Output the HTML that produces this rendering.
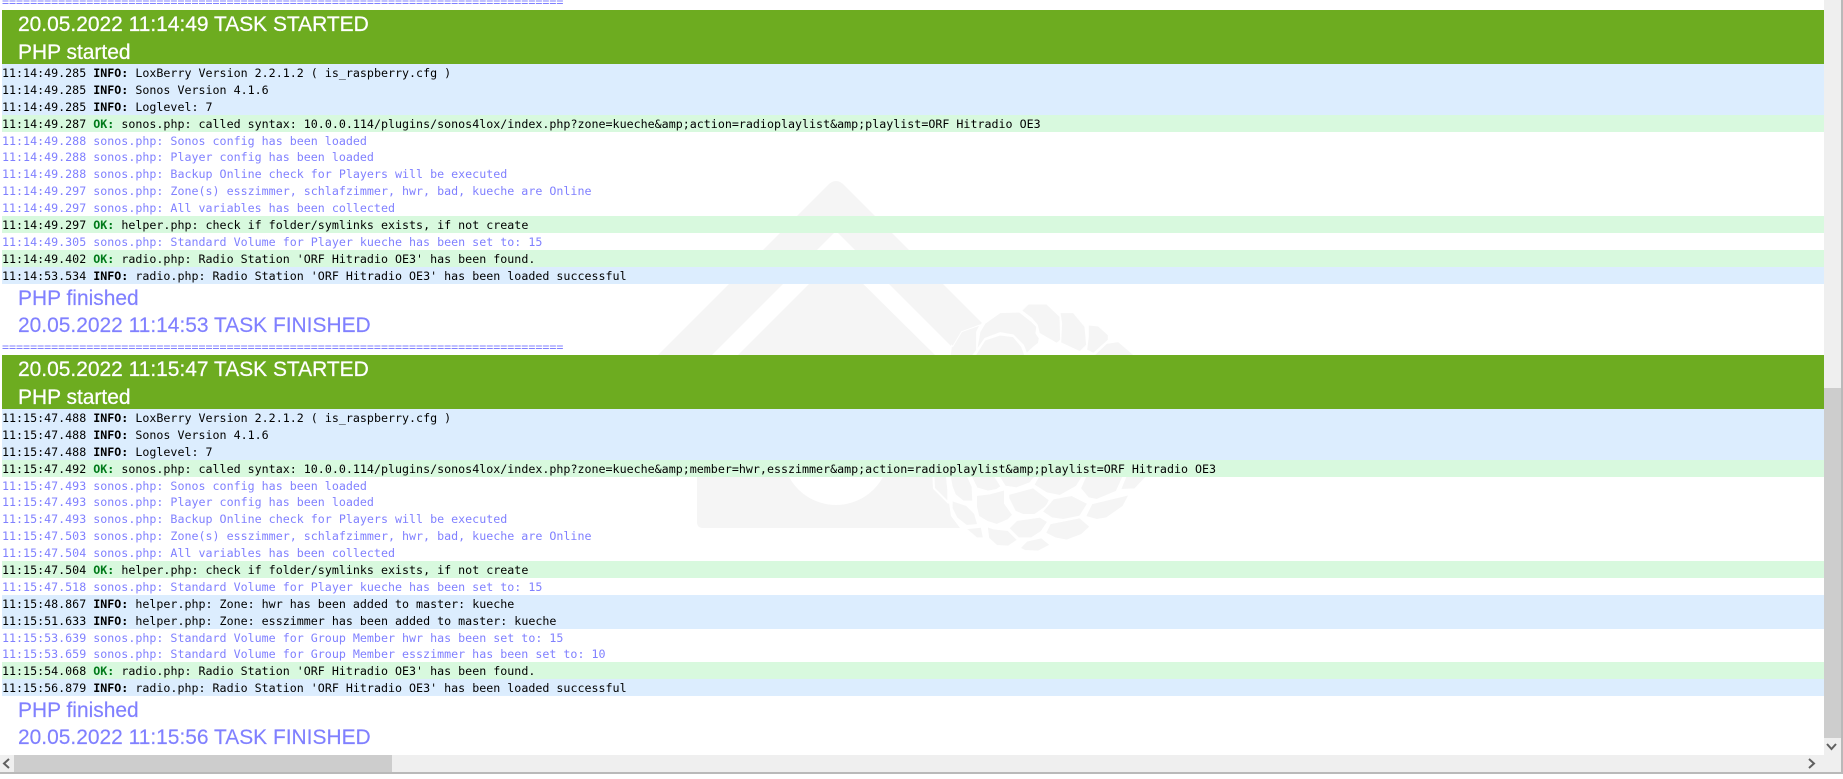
<!DOCTYPE html>
<html lang="en">
<head>
<meta charset="utf-8">
<title>Log</title>
<style>
html,body{margin:0;padding:0;background:#fff}
body{position:relative;width:1843px;height:779px;overflow:hidden}
#wm{position:absolute;left:0;top:0}
#view{position:absolute;left:0;top:0;width:1824px;height:755px;overflow:hidden}
.sep,.b{position:absolute;left:2px;width:1822px}
.sep{height:17px;line-height:17px;font:11.66px/17px "DejaVu Sans Mono",monospace;color:#8080ff;white-space:pre}
.h{position:absolute;left:2px;width:1822px;height:54px;background:#6dac20;color:#fff}
.l,.f{position:absolute;left:18px;font:20.95px/27px "Liberation Sans",Arial,sans-serif;white-space:pre;-webkit-text-stroke:.25px currentColor}
.f{color:#8080ff;-webkit-text-stroke:.15px currentColor}
.b div{height:16.9px;line-height:18.9px;font-family:"DejaVu Sans Mono",monospace;font-size:11.66px;white-space:pre;color:#000}
.i{background:#dcedfe}
.o{background:#d8f9de}
.b div.p{color:#8080ff}
b{font-weight:bold}
.o b{color:#007a1a}
.a{position:absolute;background:#efefef}
.t{position:absolute;background:#cdcdcd}
</style>
</head>
<body>
<svg id="wm" width="1843" height="779" viewBox="0 0 1843 779">
<g fill="#f5f5f5">
<path d="M593,420 L828,185 Q836,177 844,185 L982,323 L975,329 L965,336 L952,347 L836,231 L647,420 Z"/>
<path d="M836,257 L697,396 L697,522 Q697,528 703,528 L960,528 L951,516 L949,503 L934,488 L933,440 L935,355 Z"/>
</g>
<circle cx="836" cy="451.6" r="53.4" fill="#fff"/>
<g fill="#f5f5f5" stroke="#fff" stroke-width="3" transform="translate(930,290) scale(.3333)" stroke-linejoin="round">
<path d="M65,165 L68,170 L95,125 L150,105 L140,125 L140,180 L125,200 L60,200 Z"/>
<path d="M150,125 L165,100 L210,68 L268,66 L305,95 L320,110 L318,130 L328,145 L325,160 L312,170 L290,190 L280,165 L250,135 L210,128 L165,145 L140,180 Z"/>
<path d="M135,198 L165,150 L210,135 L250,140 L275,170 L285,198 Z"/>
<path d="M275,62 L295,42 L350,42 L390,80 L392,150 L380,160 L328,130 L322,105 L305,85 Z"/>
<path d="M390,68 L430,68 L465,110 L470,165 L450,185 L392,158 L395,100 Z"/>
<path d="M475,105 L505,108 L535,135 L535,150 L490,190 L470,180 L475,140 Z"/>
<path d="M490,198 L530,160 L565,155 L615,198 Z"/>
</g>
<g fill="#f5f5f5" stroke="#fff" stroke-width="6" transform="translate(680,470) scale(.3333)" stroke-linejoin="round">
<path d="M760,10 L762,55 L805,98 L805,60 L800,10 Z"/>
<path d="M808,10 L815,50 L825,75 L850,95 L880,95 L878,50 L860,10 Z"/>
<path d="M888,75 L930,70 L975,58 L975,100 L1000,135 L985,150 L950,165 L920,155 L895,140 L888,110 Z"/>
<path d="M868,10 L890,55 L925,65 L950,60 L965,50 L940,10 Z"/>
<path d="M950,10 L975,50 L1010,55 L1050,40 L1075,10 Z"/>
<path d="M985,72 L1060,52 L1090,75 L1110,90 L1100,110 L1065,135 L1030,135 L1005,125 L985,85 Z"/>
<path d="M1080,10 L1060,45 L1100,70 L1140,78 L1190,50 L1215,10 Z"/>
<path d="M1120,85 L1175,75 L1225,100 L1200,140 L1150,150 L1115,145 L1085,125 Z"/>
<path d="M1220,10 L1200,55 L1225,85 L1250,90 L1310,65 L1335,10 Z"/>
<path d="M1235,100 L1350,72 L1330,110 L1280,145 L1250,150 L1215,140 Z"/>
<path d="M1340,10 L1320,60 L1365,58 L1410,10 Z"/>
<path d="M815,90 L860,105 L885,130 L895,165 L860,168 L830,145 L815,115 Z"/>
<path d="M855,175 L905,170 L912,205 L890,205 Z"/>
<path d="M920,168 L940,175 L985,180 L1015,210 L985,230 L950,228 L925,205 Z"/>
<path d="M985,175 L1010,150 L1080,140 L1105,155 L1085,185 L1055,205 L1015,205 Z"/>
<path d="M1110,160 L1200,142 L1232,170 L1205,195 L1160,212 L1125,205 L1095,190 Z"/>
<path d="M1018,235 L1040,212 L1085,202 L1113,225 L1075,245 L1035,243 Z"/>
</g>
</svg>

<div id="view">
<div class="sep" style="top:-6px">================================================================================</div>
<div class="h" style="top:10px"><div class="l" style="left:16px;top:1px">20.05.2022 11:14:49 TASK STARTED</div><div class="l" style="left:16px;top:29px">PHP started</div></div>
<div class="b" style="top:64px">
<div class="i">11:14:49.285 <b>INFO:</b> LoxBerry Version 2.2.1.2 ( is_raspberry.cfg )</div>
<div class="i">11:14:49.285 <b>INFO:</b> Sonos Version 4.1.6</div>
<div class="i">11:14:49.285 <b>INFO:</b> Loglevel: 7</div>
<div class="o">11:14:49.287 <b>OK:</b> sonos.php: called syntax: 10.0.0.114/plugins/sonos4lox/index.php?zone=kueche&amp;amp;action=radioplaylist&amp;amp;playlist=ORF Hitradio OE3</div>
<div class="p">11:14:49.288 sonos.php: Sonos config has been loaded</div>
<div class="p">11:14:49.288 sonos.php: Player config has been loaded</div>
<div class="p">11:14:49.288 sonos.php: Backup Online check for Players will be executed</div>
<div class="p">11:14:49.297 sonos.php: Zone(s) esszimmer, schlafzimmer, hwr, bad, kueche are Online</div>
<div class="p">11:14:49.297 sonos.php: All variables has been collected</div>
<div class="o">11:14:49.297 <b>OK:</b> helper.php: check if folder/symlinks exists, if not create</div>
<div class="p">11:14:49.305 sonos.php: Standard Volume for Player kueche has been set to: 15</div>
<div class="o">11:14:49.402 <b>OK:</b> radio.php: Radio Station 'ORF Hitradio OE3' has been found.</div>
<div class="i">11:14:53.534 <b>INFO:</b> radio.php: Radio Station 'ORF Hitradio OE3' has been loaded successful</div>
</div>
<div class="f" style="top:285px">PHP finished</div>
<div class="f" style="top:312px">20.05.2022 11:14:53 TASK FINISHED</div>
<div class="sep" style="top:339px">================================================================================</div>
<div class="h" style="top:355px"><div class="l" style="left:16px;top:1px">20.05.2022 11:15:47 TASK STARTED</div><div class="l" style="left:16px;top:29px">PHP started</div></div>
<div class="b" style="top:409px">
<div class="i">11:15:47.488 <b>INFO:</b> LoxBerry Version 2.2.1.2 ( is_raspberry.cfg )</div>
<div class="i">11:15:47.488 <b>INFO:</b> Sonos Version 4.1.6</div>
<div class="i">11:15:47.488 <b>INFO:</b> Loglevel: 7</div>
<div class="o">11:15:47.492 <b>OK:</b> sonos.php: called syntax: 10.0.0.114/plugins/sonos4lox/index.php?zone=kueche&amp;amp;member=hwr,esszimmer&amp;amp;action=radioplaylist&amp;amp;playlist=ORF Hitradio OE3</div>
<div class="p">11:15:47.493 sonos.php: Sonos config has been loaded</div>
<div class="p">11:15:47.493 sonos.php: Player config has been loaded</div>
<div class="p">11:15:47.493 sonos.php: Backup Online check for Players will be executed</div>
<div class="p">11:15:47.503 sonos.php: Zone(s) esszimmer, schlafzimmer, hwr, bad, kueche are Online</div>
<div class="p">11:15:47.504 sonos.php: All variables has been collected</div>
<div class="o">11:15:47.504 <b>OK:</b> helper.php: check if folder/symlinks exists, if not create</div>
<div class="p">11:15:47.518 sonos.php: Standard Volume for Player kueche has been set to: 15</div>
<div class="i">11:15:48.867 <b>INFO:</b> helper.php: Zone: hwr has been added to master: kueche</div>
<div class="i">11:15:51.633 <b>INFO:</b> helper.php: Zone: esszimmer has been added to master: kueche</div>
<div class="p">11:15:53.639 sonos.php: Standard Volume for Group Member hwr has been set to: 15</div>
<div class="p">11:15:53.659 sonos.php: Standard Volume for Group Member esszimmer has been set to: 10</div>
<div class="o">11:15:54.068 <b>OK:</b> radio.php: Radio Station 'ORF Hitradio OE3' has been found.</div>
<div class="i">11:15:56.879 <b>INFO:</b> radio.php: Radio Station 'ORF Hitradio OE3' has been loaded successful</div>
</div>
<div class="f" style="top:697px">PHP finished</div>
<div class="f" style="top:724px">20.05.2022 11:15:56 TASK FINISHED</div>
</div>

<div class="a" style="left:1824px;top:0;width:17px;height:772px"></div>
<div class="a" style="left:0;top:755px;width:1841px;height:17px"></div>
<div class="t" style="left:1824px;top:388px;width:17px;height:350px"></div>
<div class="t" style="left:14px;top:755px;width:378px;height:17px"></div>
<div style="position:absolute;left:0;top:772px;width:1843px;height:2px;background:#b9b9b9"></div>
<div style="position:absolute;left:1841px;top:0;width:2px;height:774px;background:#b9b9b9"></div>
<svg style="position:absolute;left:0;top:0" width="1843" height="779" viewBox="0 0 1843 779" fill="none" stroke="#606060" stroke-width="2">
<path d="M9,759 L4,763.5 L9,768"/>
<path d="M1809,759 L1814,763.5 L1809,768"/>
<path d="M1827,744 L1831.5,749 L1836,744"/>
</svg>
</body>
</html>
